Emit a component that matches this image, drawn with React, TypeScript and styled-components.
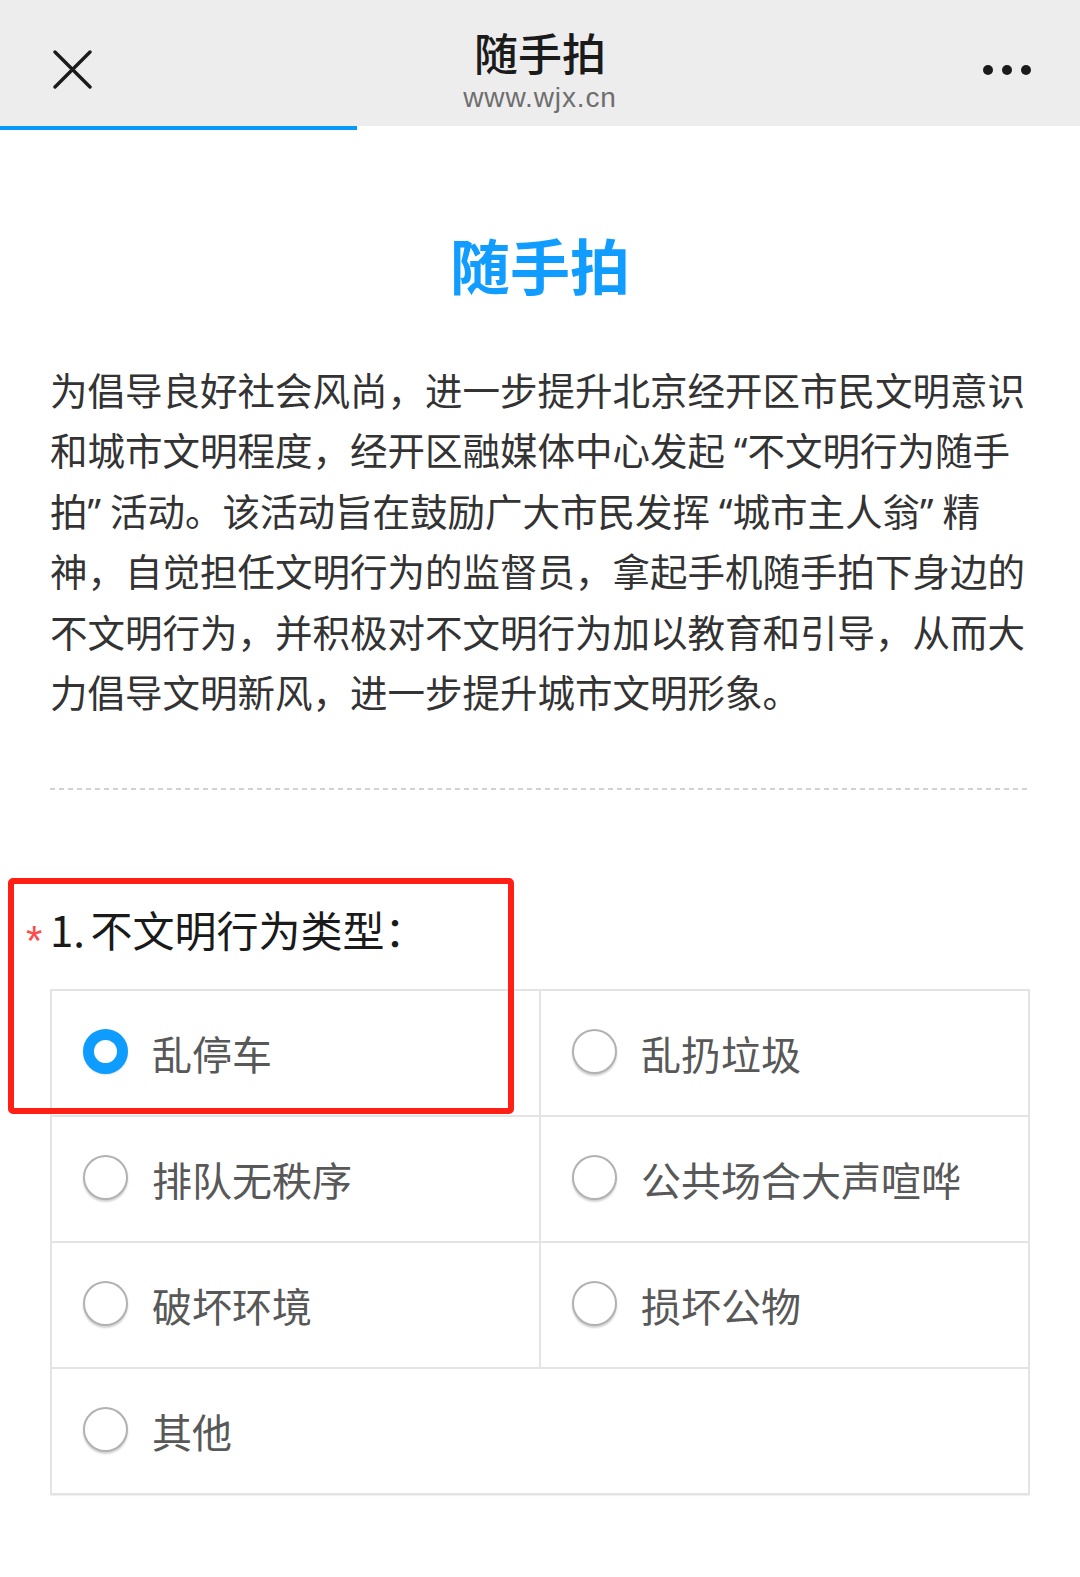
import React from "react";
import styled, { createGlobalStyle } from "styled-components";

const CJK = `"Noto Sans CJK SC", "Noto Sans", sans-serif`;
const LATIN_FIRST = `"Noto Sans", "Noto Sans CJK SC", sans-serif`;

const Global = createGlobalStyle`
  html, body { margin: 0; padding: 0; background: #ffffff; }
  body { font-family: ${CJK}; -webkit-font-smoothing: antialiased; }
  * { box-sizing: border-box; }
`;

const Screen = styled.div`
  width: 1080px;
  min-height: 1577px;
  background: #ffffff;
`;

const NavBar = styled.header`
  height: 126px;
  background: #ededed;
  display: grid;
  grid-template-columns: 1fr auto 1fr;
  align-items: start;
`;

const CloseButton = styled.div`
  padding: 50px 0 0 53px;
  line-height: 0;
`;

const NavTitleBlock = styled.div`
  padding-top: 30px;
  display: flex;
  flex-direction: column;
  align-items: center;
`;

const NavTitle = styled.div`
  font-family: ${CJK};
  font-size: 44px;
  line-height: 44px;
  font-weight: 500;
  color: #1b1b1b;
`;

const NavUrl = styled.div`
  margin-top: 11px;
  font-family: "Liberation Sans", Arial, sans-serif;
  font-size: 28px;
  line-height: 26px;
  letter-spacing: 0.9px;
  color: #6e6e6e;
`;

const MoreButton = styled.div`
  justify-self: end;
  padding: 65px 49px 0 0;
  display: flex;
  gap: 9px;
`;

const Dot = styled.span`
  width: 10px;
  height: 10px;
  border-radius: 50%;
  background: #1b1b1b;
`;

const Progress = styled.div`
  height: 4px;
  width: 357px;
  background: #0898fa;
`;

const Content = styled.main`
  padding: 104px 50px 0 50px;
`;

const PageTitle = styled.h1`
  margin: 0;
  text-align: center;
  font-family: ${CJK};
  font-size: 60px;
  line-height: 60px;
  font-weight: 700;
  color: #119dff;
`;

const Intro = styled.p`
  margin: 67px 0 0 0;
  font-family: ${LATIN_FIRST};
  font-size: 37.5px;
  line-height: 60.4px;
  color: #333333;
  white-space: nowrap;
`;

const Quote = styled.span<{ $open?: boolean }>`
  margin-left: ${(p) => (p.$open ? "9px" : "0")};
  margin-right: ${(p) => (p.$open ? "0" : "9px")};
`;

const Divider = styled.div`
  margin-top: 65px;
  height: 2px;
  background: repeating-linear-gradient(to right, #d2d2d2 0 5px, transparent 5px 9px);
`;

const QuestionSection = styled.section`
  position: relative;
  margin-top: 114px;
`;

const QuestionTitle = styled.div`
  display: flex;
  align-items: flex-start;
  font-family: ${CJK};
  font-size: 42px;
  line-height: 50px;
  word-spacing: -4px;
  color: #1a1a1a;
`;

const Required = styled.span`
  margin-left: -24px;
  width: 24px;
  padding-top: 22px;
  font-family: "Liberation Sans", Arial, sans-serif;
  font-size: 42px;
  line-height: 30px;
  color: #ff4b4b;
`;

const Options = styled.div`
  margin-top: 33px;
  display: grid;
  grid-template-columns: 1fr 1fr;
  gap: 2px;
  padding: 2px;
  background: #e4e4e4;
  box-shadow: 0 1px 1px rgba(0, 0, 0, 0.06);
`;

const OptionCell = styled.label<{ $wide?: boolean }>`
  grid-column: ${(p) => (p.$wide ? "1 / span 2" : "auto")};
  height: 124px;
  background: #ffffff;
  display: flex;
  align-items: center;
  gap: 24px;
  padding-left: 31px;
  font-family: ${CJK};
  font-size: 40px;
  color: #585858;
`;

const Radio = styled.span<{ $checked?: boolean }>`
  flex: none;
  width: 45px;
  height: 45px;
  border-radius: 50%;
  background: #ffffff;
  border: ${(p) => (p.$checked ? "11.5px solid #0e9cff" : "2px solid #b2b2b2")};
  box-shadow: ${(p) => (p.$checked ? "0 1px 2px rgba(0,0,0,0.12)" : "0 2px 2px rgba(0,0,0,0.18)")};
  margin-top: -4px;
`;

const Highlight = styled.div`
  position: absolute;
  left: -42px;
  top: -26px;
  width: 506px;
  height: 236px;
  border: 6px solid #ff1f14;
  border-radius: 5px;
  pointer-events: none;
`;

const introLines = [
  "为倡导良好社会风尚，进一步提升北京经开区市民文明意识",
  "和城市文明程度，经开区融媒体中心发起“不文明行为随手",
  "拍”活动。该活动旨在鼓励广大市民发挥“城市主人翁”精",
  "神，自觉担任文明行为的监督员，拿起手机随手拍下身边的",
  "不文明行为，并积极对不文明行为加以教育和引导，从而大",
  "力倡导文明新风，进一步提升城市文明形象。",
];

function renderLine(line: string) {
  return line.split(/([“”])/).map((part, i) => {
    if (part === "“") return <Quote key={i} $open>“</Quote>;
    if (part === "”") return <Quote key={i}>”</Quote>;
    return <React.Fragment key={i}>{part}</React.Fragment>;
  });
}

const options = [
  { label: "乱停车", checked: true },
  { label: "乱扔垃圾" },
  { label: "排队无秩序" },
  { label: "公共场合大声喧哗" },
  { label: "破坏环境" },
  { label: "损坏公物" },
  { label: "其他", wide: true },
];

export default function App() {
  return (
    <Screen>
      <Global />
      <NavBar>
        <CloseButton>
          <svg width="39" height="39" viewBox="0 0 39 39">
            <path d="M2 2 L37 37 M37 2 L2 37" stroke="#1b1b1b" strokeWidth="3.4" strokeLinecap="round" />
          </svg>
        </CloseButton>
        <NavTitleBlock>
          <NavTitle>随手拍</NavTitle>
          <NavUrl>www.wjx.cn</NavUrl>
        </NavTitleBlock>
        <MoreButton>
          <Dot />
          <Dot />
          <Dot />
        </MoreButton>
      </NavBar>
      <Progress />
      <Content>
        <PageTitle>随手拍</PageTitle>
        <Intro>
          {introLines.map((l, i) => (
            <React.Fragment key={i}>
              {renderLine(l)}
              {i < introLines.length - 1 && <br />}
            </React.Fragment>
          ))}
        </Intro>
        <Divider />
        <QuestionSection>
          <QuestionTitle>
            <Required>*</Required>
            <span>1. 不文明行为类型：</span>
          </QuestionTitle>
          <Options>
            {options.map((o) => (
              <OptionCell key={o.label} $wide={o.wide}>
                <Radio $checked={o.checked} />
                <span>{o.label}</span>
              </OptionCell>
            ))}
          </Options>
          <Highlight />
        </QuestionSection>
      </Content>
    </Screen>
  );
}
